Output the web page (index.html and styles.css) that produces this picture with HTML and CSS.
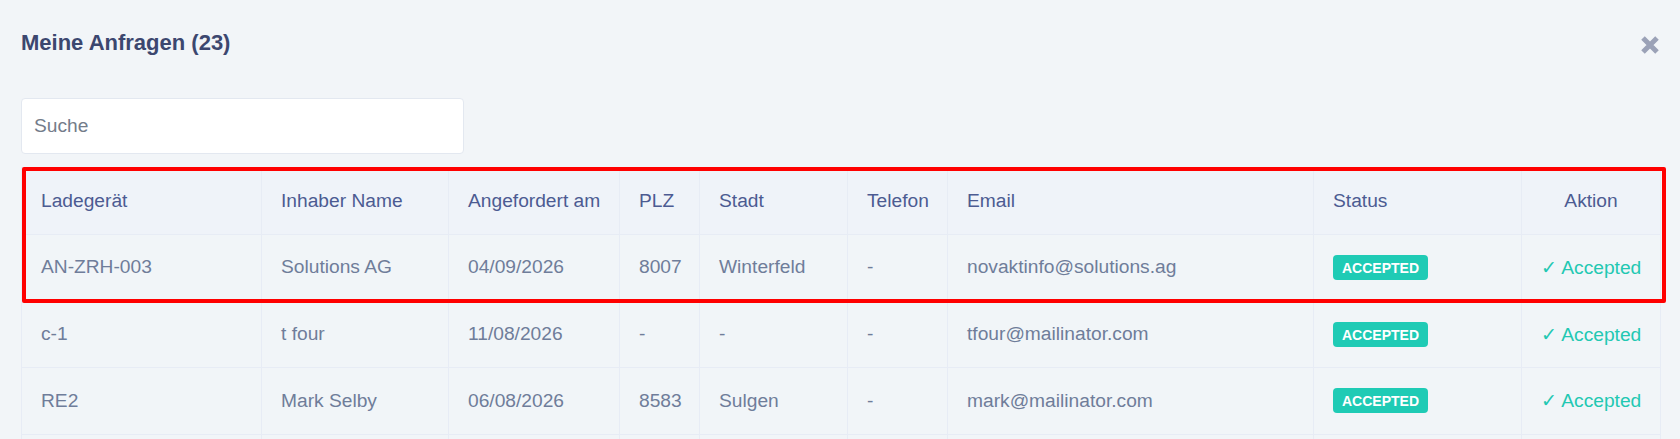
FILE: index.html
```html
<!DOCTYPE html>
<html lang="de">
<head>
<meta charset="utf-8">
<title>Meine Anfragen</title>
<link rel="stylesheet" href="styles.css">
</head>
<body>
<div class="modal">
  <header class="modal-head">
    <h2 class="title">Meine Anfragen (23)</h2>
    <button class="close" type="button" aria-label="Schließen">
      <svg viewBox="0 0 20 20" width="20" height="20" aria-hidden="true">
        <path d="M3 3 L17 17 M17 3 L3 17" stroke="#9ba2b7" stroke-width="5" fill="none" stroke-linecap="butt"/>
      </svg>
    </button>
  </header>

  <div class="search">
    <input class="search-input" type="text" placeholder="Suche">
  </div>

  <div class="table-wrap">
    <table class="requests">
      <colgroup>
        <col class="c-charger">
        <col class="c-owner">
        <col class="c-date">
        <col class="c-zip">
        <col class="c-city">
        <col class="c-phone">
        <col class="c-email">
        <col class="c-status">
        <col class="c-action">
      </colgroup>
      <thead>
        <tr>
          <th>Ladegerät</th>
          <th>Inhaber Name</th>
          <th>Angefordert am</th>
          <th>PLZ</th>
          <th>Stadt</th>
          <th>Telefon</th>
          <th>Email</th>
          <th>Status</th>
          <th class="center">Aktion</th>
        </tr>
      </thead>
      <tbody>
        <tr>
          <td>AN-ZRH-003</td>
          <td>Solutions AG</td>
          <td>04/09/2026</td>
          <td>8007</td>
          <td>Winterfeld</td>
          <td>-</td>
          <td>novaktinfo@solutions.ag</td>
          <td><span class="badge">ACCEPTED</span></td>
          <td class="center"><span class="done">✓ Accepted</span></td>
        </tr>
        <tr>
          <td>c-1</td>
          <td>t four</td>
          <td>11/08/2026</td>
          <td>-</td>
          <td>-</td>
          <td>-</td>
          <td>tfour@mailinator.com</td>
          <td><span class="badge">ACCEPTED</span></td>
          <td class="center"><span class="done">✓ Accepted</span></td>
        </tr>
        <tr>
          <td>RE2</td>
          <td>Mark Selby</td>
          <td>06/08/2026</td>
          <td>8583</td>
          <td>Sulgen</td>
          <td>-</td>
          <td>mark@mailinator.com</td>
          <td><span class="badge">ACCEPTED</span></td>
          <td class="center"><span class="done">✓ Accepted</span></td>
        </tr>
        <tr class="row-more">
          <td></td>
          <td></td>
          <td></td>
          <td></td>
          <td></td>
          <td></td>
          <td></td>
          <td></td>
          <td></td>
        </tr>
      </tbody>
    </table>
    <div class="highlight" aria-hidden="true"></div>
  </div>
</div>
</body>
</html>
```

FILE: styles.css
```css
html, body {
  margin: 0;
  background: #f2f5f8;
  font-family: "Liberation Sans", Arial, Helvetica, sans-serif;
}

.modal {
  padding: 30px 20px 0 21px;
}

.modal-head {
  display: flex;
  justify-content: space-between;
  align-items: flex-start;
  height: 26px;
}

.title {
  margin: 0;
  font-size: 22px;
  line-height: 26px;
  font-weight: 700;
  color: #3c476f;
}

.close {
  margin-top: 5px;
  width: 20px;
  height: 20px;
  padding: 0;
  border: 0;
  background: none;
  display: block;
  cursor: pointer;
}

.close svg {
  display: block;
}

.search {
  margin-top: 42px;
}

.search-input {
  display: block;
  box-sizing: border-box;
  width: 443px;
  height: 56px;
  padding: 0 12px;
  border: 1px solid #e3e8f0;
  border-radius: 4px;
  background: #ffffff;
  font-family: inherit;
  font-size: 19.2px;
  color: #444c5c;
  outline: none;
}

.search-input::placeholder {
  color: #747c8a;
}

.table-wrap {
  position: relative;
  margin-top: 13px;
}

.requests {
  width: 100%;
  border-collapse: collapse;
  table-layout: fixed;
}

.c-charger { width: 240px; }
.c-owner { width: 187px; }
.c-date { width: 171px; }
.c-zip { width: 80px; }
.c-city { width: 148px; }
.c-phone { width: 100px; }
.c-email { width: 366px; }
.c-status { width: 208px; }
.c-action { width: 139px; }

.requests tr {
  height: 66.67px;
}

.requests th,
.requests td {
  padding: 0 19px;
  text-align: left;
  vertical-align: middle;
  border: 1px solid #e7ecf5;
  font-size: 19.2px;
  font-weight: 400;
  white-space: nowrap;
}

.requests th {
  background: #eff3f9;
  color: #4c5b92;
}

.requests td {
  background: #f1f5f8;
  color: #6f7d9a;
}

.requests .center {
  text-align: center;
}

.badge {
  display: inline-block;
  height: 25px;
  line-height: 26px;
  padding: 0 9px;
  border-radius: 4px;
  background: #1fcbb5;
  color: #ffffff;
  font-size: 14px;
  font-weight: 700;
  vertical-align: middle;
}

.done {
  color: #22c8b2;
}

.highlight {
  position: absolute;
  left: 1px;
  top: 0;
  width: 1644px;
  height: 136px;
  box-sizing: border-box;
  border: 4.5px solid #ff0000;
  border-radius: 2px;
  pointer-events: none;
}
```
